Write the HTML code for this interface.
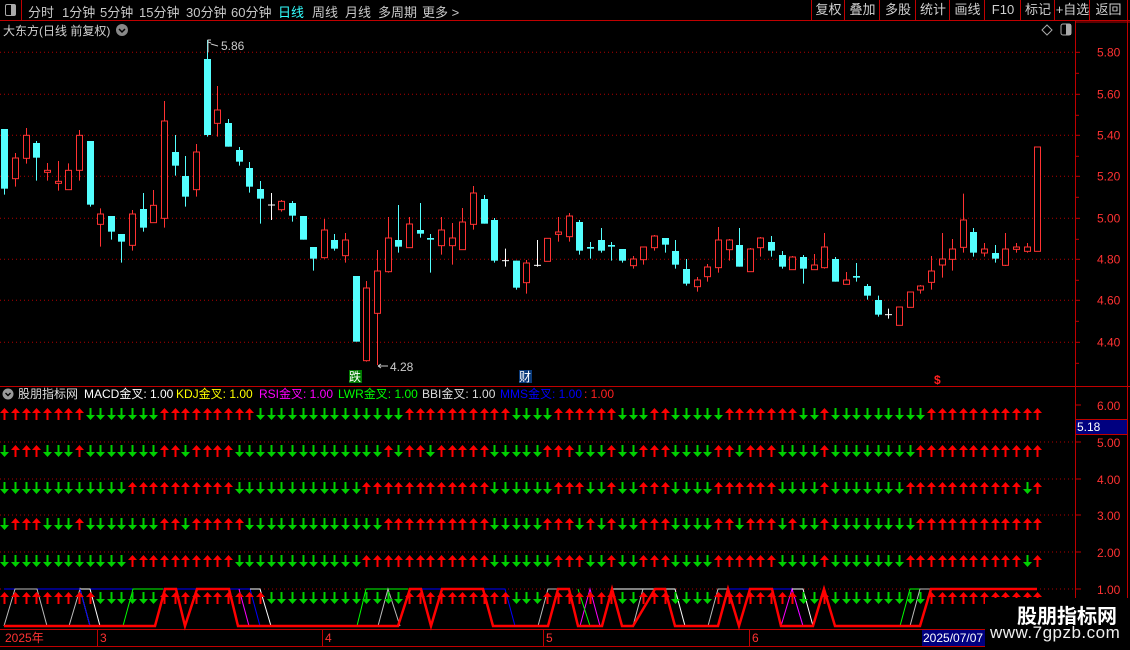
<!DOCTYPE html>
<html><head><meta charset="utf-8"><style>
html,body{margin:0;padding:0;background:#000;width:1130px;height:650px;overflow:hidden;font-family:"Liberation Sans","Noto Sans CJK SC",sans-serif}
#top{position:absolute;left:0;top:0;width:1130px;height:20px;border-bottom:1px solid #c00000;color:#c8c8c8;font-size:13px}
#top span{position:absolute;top:2px;white-space:nowrap}
.btn{position:absolute;top:0;height:20px;border-left:1px solid #c00000;color:#d0d0d0;font-size:13px;line-height:20px;text-align:center}
svg{position:absolute;left:0;top:0}
text{font-family:"Liberation Sans","Noto Sans CJK SC",sans-serif}
</style></head><body>
<div id="top">
<div style="position:absolute;left:0;top:0;width:21px;height:20px;border-right:1px solid #c00000"><div style="position:absolute;left:5px;top:4px;width:9px;height:10px;border:1px solid #aaa;border-radius:2px"><div style="position:absolute;right:0;top:0;width:4px;height:10px;background:#aaa"></div></div></div>
<span style="left:28px">分时</span><span style="left:62px">1分钟</span><span style="left:100px">5分钟</span><span style="left:139px">15分钟</span><span style="left:186px">30分钟</span><span style="left:231px">60分钟</span><span style="left:278px;color:#3ff">日线</span><span style="left:312px">周线</span><span style="left:345px">月线</span><span style="left:378px">多周期</span><span style="left:422px">更多 &gt;</span>
<div class="btn" style="left:811px;width:33px">复权</div><div class="btn" style="left:844px;width:35px">叠加</div><div class="btn" style="left:879px;width:36px">多股</div><div class="btn" style="left:915px;width:34px">统计</div><div class="btn" style="left:949px;width:35px">画线</div><div class="btn" style="left:984px;width:36px">F10</div><div class="btn" style="left:1020px;width:34px">标记</div><div class="btn" style="left:1054px;width:35px">+自选</div><div class="btn" style="left:1089px;width:37px;border-right:1px solid #c00000">返回</div>
</div>
<svg id="s" width="1130" height="650" style="top:0"></svg>
<div style="position:absolute;left:985px;top:598px;width:145px;height:52px;background:#000"></div>
<div style="position:absolute;left:1017px;top:600px;color:#fff;font-size:20px;font-weight:bold;font-family:'Noto Sans CJK SC',sans-serif">股朋指标网</div>
<div style="position:absolute;left:990px;top:623px;color:#eee;font-size:17px;font-family:'Liberation Sans',sans-serif;letter-spacing:0.5px">www.7gpzb.com</div>
<script>
var S=document.getElementById('s'),h='';
function X(i){return 4.3+10.65*i}
function Y(z){return 30+z/3}
var gl=[52.3,94.3,135.3,176.3,218.3,259.3,300.3,342.3],lab=['5.80','5.60','5.40','5.20','5.00','4.80','4.60','4.40'];
gl.forEach(function(y,k){h+='<line x1="0" x2="1075" y1="'+y+'" y2="'+y+'" stroke="#b00000" stroke-dasharray="1,3"/>';h+='<text x="1097" y="'+(y+4)+'" fill="#ff3232" font-size="12">'+lab[k]+'</text><line x1="1075" x2="1080" y1="'+y+'" y2="'+y+'" stroke="#c00000"/><line x1="1075" x2="1079" y1="'+(y+21)+'" y2="'+(y+21)+'" stroke="#c00000"/>';});
h+='<line x1="1075.5" x2="1075.5" y1="21" y2="630" stroke="#c00000"/><line x1="1127.5" x2="1127.5" y1="21" y2="630" stroke="#c00000"/>';
h+='<line x1="0" x2="1130" y1="386.5" y2="386.5" stroke="#c00000"/><line x1="1075" x2="1130" y1="22" y2="22" stroke="#c00000"/>';
h+='<line x1="0" x2="1130" y1="629.5" y2="629.5" stroke="#c00000"/><line x1="0" x2="1130" y1="646.5" y2="646.5" stroke="#c00000"/>';
var C=[['c',297,476,297,494],['r',384,446,369,470],['r',316,385,294,401],['c',339,383,333,452],['r',421,427,399,452],['r',454,460,393,482],['r',421,479,400,479],['r',316,421,300,452],['c',333,524,333,530],['r',552,583,535,650],['c',558,605,558,629],['c',612,635,612,698],['r',552,646,540,662],['c',537,593,489,605],['r',526,578,480,578],['r',273,565,213,593],['c',366,407,315,437],['c',438,500,378,530],['r',366,479,342,500],['c',87,315,30,320],['r',240,280,168,320],['c',279,350,267,350],['c',360,395,351,407],['c',414,470,396,488],['c',477,506,453,581],['w',525,525,489,570],['r',514,539,510,545],['c',519,557,513,575],['c',558,629,558,629],['c',651,686,651,722],['r',600,683,567,686],['c',630,656,612,662],['r',630,677,609,698],['c',738,935,738,935],['r',774,992,753,995],['r',723,850,660,1005],['r',624,725,561,728],['c',630,650,525,668],['r',582,653,561,653],['c',600,611,519,623],['c',624,629,612,728],['r',600,647,561,674],['r',624,647,579,704],['r',576,659,534,659],['r',489,583,468,599],['c',507,581,495,581],['c',570,692,564,698],['w',692,692,656,710],['c',692,773,692,779],['r',699,758,690,791],['w',706,706,630,710],['r',625,694,625,694],['r',606,613,561,635],['r',558,620,549,635],['c',576,662,570,674],['c',651,656,636,686],['c',630,662,594,668],['c',645,650,636,692],['c',657,692,657,698],['r',687,707,678,716],['r',651,689,651,704],['r',618,653,615,662],['c',624,644,624,668],['c',663,704,630,716],['c',717,761,687,767],['r',750,770,741,785],['r',711,740,702,755],['r',630,713,591,728],['r',630,659,627,692],['c',645,710,594,710],['r',657,725,654,725],['r',624,653,621,680],['c',636,662,618,680],['c',675,710,663,716],['r',681,719,678,719],['c',681,716,675,761],['r',705,719,672,719],['r',651,713,609,716],['c',687,755,681,755],['r',750,763,726,763],['c',738,743,699,755],['c',768,797,762,809],['c',810,854,797,860],['w',854,854,836,866],['r',831,886,831,886],['r',786,832,786,832],['r',768,780,765,791],['r',723,757,678,779],['r',687,705,609,743],['r',657,688,627,722],['r',570,652,491,668],['c',606,668,594,680],['r',657,669,639,680],['c',669,686,645,698],['r',657,706,609,708],['r',651,658,639,668],['r',651,664,639,668],['r',351,664,351,664]];
C.forEach(function(c,i){var x=Math.round(X(i))+.5,t=Y(c[1]),b=Y(c[2]),wt=Y(c[3]),wb=Y(c[4]);
if(c[0]=='w'){h+='<line x1="'+x+'" x2="'+x+'" y1="'+wt+'" y2="'+wb+'" stroke="#fff"/><line x1="'+(x-3.5)+'" x2="'+(x+3.5)+'" y1="'+t+'" y2="'+t+'" stroke="#fff"/>';return;}
var col=c[0]=='r'?'#ff3232':'#54ffff';
h+='<line x1="'+x+'" x2="'+x+'" y1="'+wt+'" y2="'+wb+'" stroke="'+col+'"/>';
if(b-t<1.5)b=t+1.5;
if(c[0]=='r')h+='<rect x="'+(x-3)+'" y="'+t+'" width="6" height="'+(b-t)+'" fill="#000" stroke="'+col+'"/>';
else h+='<rect x="'+(x-3.5)+'" y="'+t+'" width="7" height="'+(b-t)+'" fill="'+col+'"/>';});
h+='<text x="3" y="35" fill="#d0d0d0" font-size="12">大东方(日线 前复权)</text><circle cx="122" cy="30" r="6" fill="#888"/><path d="M119 29l3 3 3-3" stroke="#000" fill="none" stroke-width="1.5"/>';
h+='<path d="M1047 25l5 5-5 5-5-5z" stroke="#aaa" fill="none"/><rect x="1061" y="24" width="10" height="11" rx="2" stroke="#aaa" fill="none"/><rect x="1066" y="24" width="5" height="11" fill="#aaa"/>';
h+='<path d="M208 52V40h3M208 42l3 1" stroke="#ccc" fill="none"/><line x1="211" y1="44" x2="218" y2="46" stroke="#ccc"/><text x="221" y="50" fill="#ccc" font-size="12">5.86</text>';
h+='<path d="M378 366h10M378 366l3-2M378 366l3 2" stroke="#ccc" fill="none"/><text x="390" y="371" fill="#ccc" font-size="12">4.28</text>';
h+='<rect x="349" y="370" width="13" height="13" fill="#007a00"/><text x="349" y="381" fill="#fff" font-size="12">跌</text><rect x="519" y="370" width="13" height="13" fill="#0a3a7a"/><text x="519" y="381" fill="#fff" font-size="12">财</text><text x="934" y="384" fill="#ff2020" font-size="12" font-weight="bold">$</text>';
h+='<circle cx="8" cy="394" r="5.5" fill="#999"/><path d="M5.5 393l2.5 2.5 2.5-2.5" stroke="#000" fill="none" stroke-width="1.4"/>';
h+='<text y="398" font-size="12"><tspan x="18" fill="#ddd">股朋指标网</tspan><tspan x="84" fill="#fff">MACD金叉: 1.00</tspan><tspan x="176" fill="#ff0">KDJ金叉: 1.00</tspan><tspan x="259" fill="#f0f">RSI金叉: 1.00</tspan><tspan x="338" fill="#0f0">LWR金叉: 1.00</tspan><tspan x="422" fill="#ddd">BBI金叉: 1.00</tspan><tspan x="500" fill="#0000ff">MMS金叉: 1.00</tspan><tspan x="584" fill="#ff2020">: 1.00</tspan></text>';
var L=[405,442,479,515,552,589],lv=['6.00','5.00','4.00','3.00','2.00','1.00'];
L.forEach(function(y,k){if(k)h+='<line x1="0" x2="1075" y1="'+y+'" y2="'+y+'" stroke="#b00000" stroke-dasharray="1,3"/>';h+='<text x="1097" y="'+(y+5)+'" fill="#ff3232" font-size="12">'+lv[k]+'</text><line x1="1075" x2="1081" y1="'+y+'" y2="'+y+'" stroke="#c00000"/>';});
function pat(s){var a=[];s.split(' ').forEach(function(r){var t=r[0],p=r.slice(1).split('-'),st=+p[0],en=p.length>1?+p[1]:st;for(var i=st;i<=en;i++)a[i]=t;});return a;}
var r3='D0-11 U12-21 D22-33 U34-45 D46-51 U52-54 D55-56 U57 D58-59 U60-62 D63-66 U67-72 D73-76 U77 D78-84 U85-95 D96 U97';
var R=['U0-7 D8-14 U15-23 D24-37 U38-47 D48-51 U52-57 D58-60 U61-62 D63-67 U68-74 D75-76 U77 D78-86 U87-97',
'D0 U1-3 D4-6 U7 D8-14 U15-16 D17 U18-21 D22-35 U36 D37 U38-39 D40 U41-45 D46-50 U51-53 D54-56 U57 D58-59 U60-62 D63-66 U67-68 D69 U70-72 D73-76 U77 D78-85 U86-97',
r3,
'D0 U1-3 D4-6 U7 D8-14 U15-16 D17 U18-22 D23-35 U36-45 D46-50 U51-53 D54 U55 D56 U57 D58-59 U60-62 D63-66 U67-68 D69 U70-72 D73 U74 D75-76 U77 D78-85 U86-97',
r3,
'U0-8 D9-14 U15-24 D25-37 U38-47 D48-50 U51-57 D58-59 U60-62 D63-66 U67-74 D75-76 U77 D78-86 U87-97'];
function pl(pts,col,w){h+='<polyline points="'+pts+'" fill="none" stroke="'+col+'" stroke-width="'+w+'"/>';}
pl('4,589 250,589','#0000ff',1);pl('420,589 505,589 515,626','#0000ff',1);pl('728,589 792,589 803,626','#0000ff',1);pl('1017,589 1037,589','#0000ff',1);
pl('4,626 15,589 37,589 47,626','#bbb',1);pl('69,626 80,589 90,626','#bbb',1);pl('80,589 90,589 100,626','#fff',1);pl('80,589 90,626','#0000ff',1);
pl('123,626 133,589 163,589','#0f0',1);pl('239,589 249,626','#f0f',1);pl('250,589 260,626','#0000ff',1);pl('250,589 260,589 271,626','#fff',1);
pl('357,626 366,589 408,589','#0f0',1);pl('378,626 388,589 400,626','#bbb',1);pl('538,626 548,589 560,589','#bbb',1);
pl('580,626 590,589 600,626','#f0f',1);pl('578,589 590,626','#0f0',1);pl('612,589 675,589 685,626','#fff',1);pl('633,626 643,589','#bbb',1);
pl('708,626 718,589 728,589','#bbb',1);pl('781,626 792,589 803,626','#f0f',1);pl('792,589 803,589 813,626','#fff',1);pl('900,626 910,589 930,589','#0f0',1);pl('910,626 920,589 930,589','#bbb',1);
R.forEach(function(s,k){var a=pat(s),t=L[k]+3;for(var i=0;i<98;i++){var x=Math.round(X(i))+.5;
if(a[i]=='U')h+='<path d="M'+(x-4.5)+' '+(t+5)+'L'+x+' '+t+'L'+(x+4.5)+' '+(t+5)+'H'+(x+1)+'V'+(t+12)+'H'+(x-1)+'V'+(t+5)+'Z" fill="#ff0000"/>';
else h+='<path d="M'+(x-4.5)+' '+(t+7)+'L'+x+' '+(t+12)+'L'+(x+4.5)+' '+(t+7)+'H'+(x+1)+'V'+t+'H'+(x-1)+'V'+(t+7)+'Z" fill="#00d000"/>';}});
pl('4,626 155,626 165,589 176,589 185,626 197,589 229,589 238,626 398,626 410,589 421,589 431,626 442,589 483,589 493,626 548,626 558,589 569,589 578,626 602,626 612,589 622,626 633,626 655,589 665,589 675,626 718,626 728,589 739,626 750,589 772,589 781,626 813,626 824,589 835,626 920,626 931,589 1037,589','#ff0000',2.5);
h+='<rect x="1075.5" y="419.5" width="52" height="15" fill="#000080" stroke="#c00000"/><text x="1077" y="431" fill="#fff" font-size="12">5.18</text>';
h+='<text x="5" y="642" fill="#ff3232" font-size="12">2025年</text>';
[[100,'3'],[325,'4'],[546,'5'],[752,'6']].forEach(function(d){h+='<line x1="'+(d[0]-2.5)+'" x2="'+(d[0]-2.5)+'" y1="630" y2="646" stroke="#c00000"/><text x="'+d[0]+'" y="642" fill="#ff3232" font-size="12">'+d[1]+'</text>';});
h+='<rect x="922" y="630" width="63" height="16" fill="#000080"/><text x="923" y="642" fill="#fff" font-size="12">2025/07/07</text>';
S.innerHTML=h;
</script>
</body></html>
